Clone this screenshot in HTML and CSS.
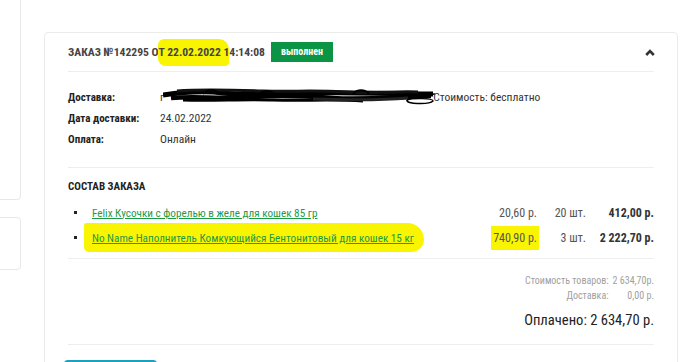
FILE: index.html
```html
<!DOCTYPE html>
<html lang="ru">
<head>
    <meta charset="UTF-8">
    <meta name="viewport" content="width=device-width, initial-scale=1.0">
    <title>Заказ №142295</title>
    <link rel="stylesheet" href="styles.css">
</head>
<body>
    <div class="page">
        <aside class="side">
            <div class="side-box side-box-tall"></div>
            <div class="side-box"></div>
        </aside>

        <section class="order">
            <header class="order-head">
                <h2 class="order-title">ЗАКАЗ №142295 О<span class="marker marker-head">Т 22.02.2022 1</span>4:14:08</h2>
                <span class="badge">выполнен</span>
                <svg class="toggle" width="10" height="7" viewBox="0 0 10 7">
                    <path d="M1.2 6 L5 2.2 L8.8 6" fill="none" stroke="#333" stroke-width="2.6"/>
                </svg>
            </header>

            <dl class="info">
                <div class="info-row">
                    <dt>Доставка:</dt>
                    <dd>г<svg class="scribble" width="272" height="18" viewBox="0 0 272 18">
                        <path d="M0 7 C20 4 40 2 60 5 S110 6 150 5 S220 6 270 6" fill="none" stroke="#000" stroke-width="5"/>
                        <path d="M8 10 C30 8 60 11 90 9 S140 8 170 10 S230 9 268 8" fill="none" stroke="#000" stroke-width="4.5"/>
                        <path d="M14 3 C40 1 70 2 100 3 S150 2 180 4 S230 3 255 4" fill="none" stroke="#111" stroke-width="3"/>
                        <path d="M20 12 C50 13 80 11 110 12 S170 11 200 13" fill="none" stroke="#000" stroke-width="3"/>
                        <path d="M150 11 C180 12 210 13 245 10" fill="none" stroke="#222" stroke-width="3"/>
                        <path d="M40 6 C44 1 52 1 56 6 M96 7 C100 2 108 2 112 7 M190 6 C194 1 202 1 206 6" fill="none" stroke="#000" stroke-width="2"/>
                        <path d="M244 12 C242 16 266 17 270 13 C270 10 250 10 244 12" fill="none" stroke="#000" stroke-width="1.5"/>
                        <path d="M262 7 L272 6" fill="none" stroke="#000" stroke-width="1.5"/>
                    </svg>Стоимость: бесплатно</dd>
                </div>
                <div class="info-row">
                    <dt>Дата доставки:</dt>
                    <dd>24.02.2022</dd>
                </div>
                <div class="info-row">
                    <dt>Оплата:</dt>
                    <dd>Онлайн</dd>
                </div>
            </dl>

            <div class="items">
                <h3 class="items-title">СОСТАВ ЗАКАЗА</h3>
                <ul class="item-list">
                    <li class="item">
                        <span class="item-name"><a href="#">Felix Кусочки с форелью в желе для кошек 85 гр</a></span>
                        <span class="item-price">20,60 р.</span>
                        <span class="item-qty">20 шт.</span>
                        <span class="item-sum">412,00 р.</span>
                    </li>
                    <li class="item">
                        <span class="item-name"><a class="marker marker-link" href="#">No Name Наполнитель Комкующийся Бентонитовый для кошек 15 кг</a></span>
                        <span class="item-price"><span class="marker marker-price">740,90 р.</span></span>
                        <span class="item-qty">3 шт.</span>
                        <span class="item-sum">2 222,70 р.</span>
                    </li>
                </ul>
            </div>

            <div class="totals">
                <div class="totals-grid">
                    <span>Стоимость товаров:</span><span>2 634,70р.</span>
                    <span>Доставка:</span><span>0,00 р.</span>
                </div>
                <div class="totals-paid">Оплачено: 2 634,70 р.</div>
            </div>

            <div class="actions">
                <button class="btn" type="button" aria-label="Повторить заказ"></button>
            </div>
        </section>
    </div>
</body>
</html>
```

FILE: styles.css
```css
* {
    margin: 0;
    padding: 0;
    box-sizing: border-box;
}

body {
    background: #fff;
    font-family: "Roboto Condensed", Roboto, sans-serif;
    font-size: 11.5px;
    color: #333;
    overflow: hidden;
}

.page {
    display: flex;
    gap: 23px;
}

/* sidebar, mostly off screen */
.side {
    width: 21px;
    flex-shrink: 0;
    display: flex;
    flex-direction: column;
    gap: 17px;
}

.side-box {
    height: 53px;
    margin-left: -60px;
    border: 1px solid #e8e8e8;
    border-radius: 4px;
}

.side-box-tall {
    height: 230px;
    margin-top: -30px;
}

/* order card */
.order {
    width: 634px;
    flex-shrink: 0;
    margin-top: 32px;
    padding: 0 23px;
    border: 1px solid #ebebeb;
    border-radius: 4px;
    min-height: 400px;
}

.order-head {
    display: flex;
    align-items: center;
    height: 39px;
    border-bottom: 1px solid #eeeeee;
}

.order-title {
    font-size: 11.6px;
    font-weight: 700;
    color: #444;
    white-space: nowrap;
}

.badge {
    margin-left: 6px;
    padding: 0 10px;
    height: 20px;
    line-height: 20px;
    background: #0b9444;
    color: #fff;
    font-size: 10px;
    font-weight: 700;
}

.toggle {
    margin-left: auto;
    margin-right: -1px;
}

.marker {
    background: #f9f500;
}

.marker-head {
    padding: 6px 0 7px 1px;
    margin-left: -1px;
    border-radius: 6px 10px 4px 8px;
}

.marker-link {
    padding: 9px 10px 7px 8px;
    margin-left: -8px;
    border-radius: 6px 40px 30px 12px;
}

.marker-price {
    padding: 5px 2px 5px 2px;
    margin-right: -2px;
}

/* info rows */
.info {
    padding: 15px 0 17px;
    border-bottom: 1px solid #eeeeee;
}

.info-row {
    display: flex;
    line-height: 21px;
}

.info-row dt {
    width: 92px;
    font-size: 11px;
    font-weight: 700;
    color: #222;
}

.info-row dd {
    display: flex;
    align-items: center;
    white-space: nowrap;
}

.scribble {
    margin: -2px -2px 0 -1px;
}

/* items */
.items {
    padding: 12px 0 8px;
    border-bottom: 1px solid #eeeeee;
}

.items-title {
    font-size: 11px;
    font-weight: 700;
    line-height: 14px;
    color: #222;
}

.item-list {
    list-style: none;
    margin-top: 6px;
}

.item {
    display: grid;
    grid-template-columns: 1fr 80px 49px 68px;
    align-items: center;
    height: 25px;
    padding-left: 24px;
    position: relative;
    white-space: nowrap;
}

.item::before {
    content: "";
    position: absolute;
    left: 6px;
    top: 11px;
    width: 3px;
    height: 3px;
    background: #222;
}

.item-name a {
    font-size: 11.2px;
    color: #1d9a45;
    text-decoration: underline;
}

.item-price,
.item-qty,
.item-sum {
    text-align: right;
    color: #555;
    font-size: 12px;
}

.item-sum {
    font-weight: 700;
    color: #333;
}

/* totals */
.totals {
    padding: 14px 0 14px;
    border-bottom: 1px solid #eeeeee;
    display: flex;
    flex-direction: column;
    align-items: flex-end;
}

.totals-grid {
    display: grid;
    grid-template-columns: auto auto;
    column-gap: 4px;
    font-size: 10px;
    line-height: 15px;
    color: #a0a0a0;
}

.totals-grid span {
    text-align: right;
}

.totals-paid {
    margin-top: 7px;
    font-size: 14.6px;
    line-height: 20px;
    color: #222;
}

.actions {
    padding-top: 15px;
}

.btn {
    display: block;
    width: 93px;
    height: 34px;
    margin-left: -4px;
    border: 2px solid #1aa2bd;
    border-radius: 4px;
    background: #fff;
}
```
